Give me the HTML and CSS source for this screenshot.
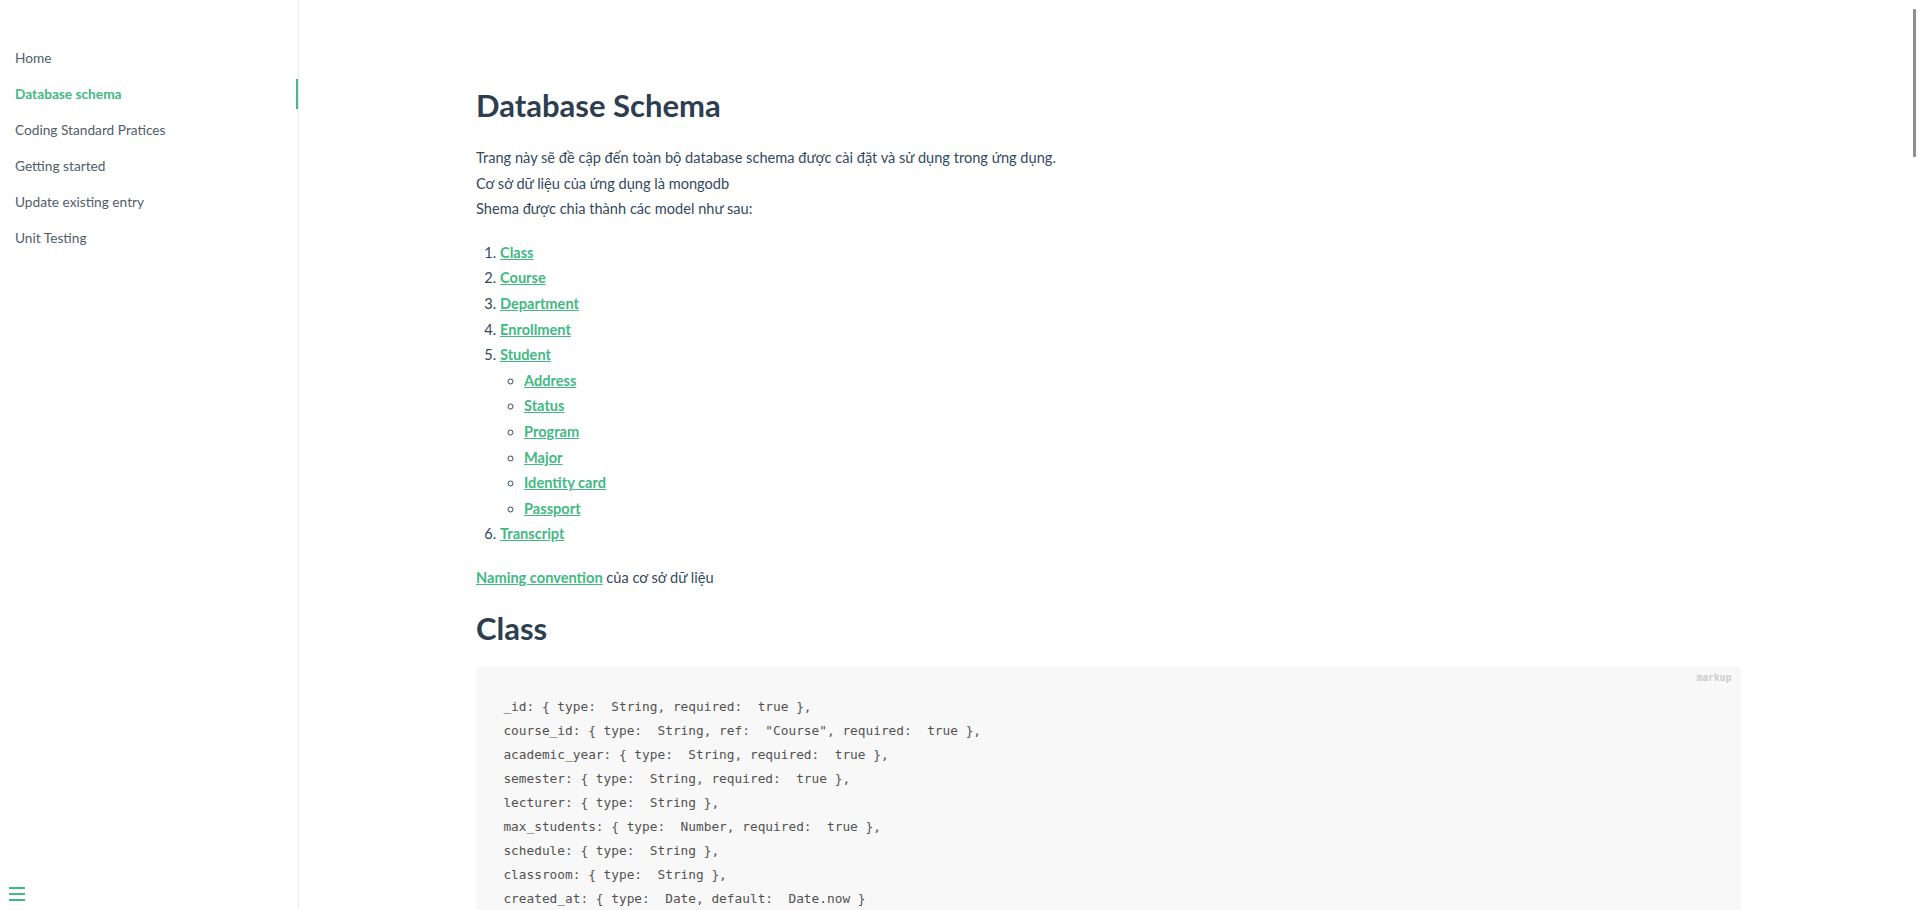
FILE: index.html
```html
<!DOCTYPE html>
<html lang="vi">
<head>
<meta charset="utf-8">
<title>Database Schema</title>
<link rel="stylesheet" href="styles.css">
</head>
<body>
<div class="app">
  <aside class="sidebar">
    <nav class="sidebar-nav">
      <ul class="nav-list">
        <li class="nav-item"><a class="nav-link" href="#/">Home</a></li>
        <li class="nav-item active"><a class="nav-link" href="#/database-schema">Database schema</a></li>
        <li class="nav-item"><a class="nav-link" href="#/coding-standard">Coding Standard Pratices</a></li>
        <li class="nav-item"><a class="nav-link" href="#/getting-started">Getting started</a></li>
        <li class="nav-item"><a class="nav-link" href="#/update-existing-entry">Update existing entry</a></li>
        <li class="nav-item"><a class="nav-link" href="#/unit-testing">Unit Testing</a></li>
      </ul>
    </nav>
    <button class="sidebar-toggle" aria-label="Menu"><span class="bar"></span><span class="bar"></span><span class="bar"></span></button>
  </aside>
  <main class="content">
    <article class="markdown-section">
      <h1 class="heading">Database Schema</h1>
      <p class="para">Trang này sẽ đề cập đến toàn bộ database schema được cài đặt và sử dụng trong ứng dụng.<br>Cơ sở dữ liệu của ứng dụng là mongodb<br>Shema được chia thành các model như sau:</p>
      <ol class="model-list">
        <li><a class="link" href="#class">Class</a></li>
        <li><a class="link" href="#course">Course</a></li>
        <li><a class="link" href="#department">Department</a></li>
        <li><a class="link" href="#enrollment">Enrollment</a></li>
        <li><a class="link" href="#student">Student</a>
          <ul class="sub-list">
            <li><a class="link" href="#address">Address</a></li>
            <li><a class="link" href="#status">Status</a></li>
            <li><a class="link" href="#program">Program</a></li>
            <li><a class="link" href="#major">Major</a></li>
            <li><a class="link" href="#identity-card">Identity card</a></li>
            <li><a class="link" href="#passport">Passport</a></li>
          </ul>
        </li>
        <li><a class="link" href="#transcript">Transcript</a></li>
      </ol>
      <p class="para naming"><a class="link" href="#naming">Naming convention</a> của cơ sở dữ liệu</p>
      <h1 class="heading heading-class" id="class">Class</h1>
      <pre class="code-block" data-lang="markup"><span class="lang">markup</span><code class="code">_id: { type:  String, required:  true },
course_id: { type:  String, ref:  "Course", required:  true },
academic_year: { type:  String, required:  true },
semester: { type:  String, required:  true },
lecturer: { type:  String },
max_students: { type:  Number, required:  true },
schedule: { type:  String },
classroom: { type:  String },
created_at: { type:  Date, default:  Date.now }
</code></pre>
    </article>
  </main>
  <div class="scroll-thumb"></div>
</div>
</body>
</html>
```
FILE: styles.css
```css
html, body {
  margin: 0;
  padding: 0;
  height: 100%;
  overflow: hidden;
  background: #fff;
}
body {
  font-family: Lato, "Noto Sans", sans-serif;
  color: #34495e;
  -webkit-font-smoothing: antialiased;
}
.app {
  display: flex;
  height: 910px;
}
.sidebar {
  width: 299px;
  flex: 0 0 299px;
  box-sizing: border-box;
  border-right: 1px solid rgba(0,0,0,.07);
  height: 100%;
  position: relative;
}
.nav-list {
  list-style: none;
  margin: 0;
  padding: 43px 0 0 15px;
  display: flex;
  flex-direction: column;
  gap: 6px;
}
.nav-link {
  display: block;
  font-size: 13.7px;
  line-height: 30px;
  color: #505d6b;
  text-decoration: none;
  white-space: nowrap;
}
.nav-item.active .nav-link {
  color: #42b983;
  font-weight: 700;
  border-right: 2px solid #42b983;
}
.sidebar-toggle {
  position: absolute;
  left: 9px;
  top: 887px;
  width: 16px;
  height: 14px;
  padding: 0;
  margin: 0;
  border: 0;
  background: transparent;
  display: flex;
  flex-direction: column;
  gap: 4px;
}
.sidebar-toggle .bar {
  display: block;
  width: 16px;
  height: 2px;
  background: #42b983;
}
.content {
  flex: 1;
  min-width: 0;
}
.markdown-section {
  max-width: 1265px;
  margin: 0 auto;
  padding: 86px 15px 40px;
}
.heading {
  font-size: 31px;
  line-height: 38px;
  font-weight: 700;
  color: #2c3e50;
  margin: 0 0 21px;
}
.heading-class {
  margin: 18px 0 20px;
}
.para {
  font-size: 14.6px;
  line-height: 25.6px;
  margin: 0;
}
.model-list {
  font-size: 14.6px;
  line-height: 25.6px;
  margin: 18px 0 0;
  padding-left: 24px;
}
.sub-list {
  list-style-type: circle;
  margin: 0;
  padding-left: 24px;
}
.naming {
  margin-top: 18px;
}
.link {
  color: #42b983;
  font-weight: 700;
  text-decoration: underline;
  text-underline-offset: 1px;
}
.code-block {
  position: relative;
  margin: 0;
  padding: 0 22.4px;
  background: #f8f8f8;
  font-family: "DejaVu Sans Mono", "Liberation Mono", monospace;
  line-height: 24px;
  overflow: hidden;
}
.lang {
  position: absolute;
  top: 5.8px;
  right: 9.6px;
  font-size: 9.6px;
  line-height: 12px;
  font-weight: 700;
  color: #ccc;
}
.code {
  display: block;
  padding: 28.2px 5px;
  font-size: 12.8px;
  color: #525252;
  white-space: pre;
}
.scroll-thumb {
  position: fixed;
  top: 9px;
  right: 2px;
  width: 3px;
  height: 148px;
  background: #8f8f8f;
  border-radius: 1px;
}
```
